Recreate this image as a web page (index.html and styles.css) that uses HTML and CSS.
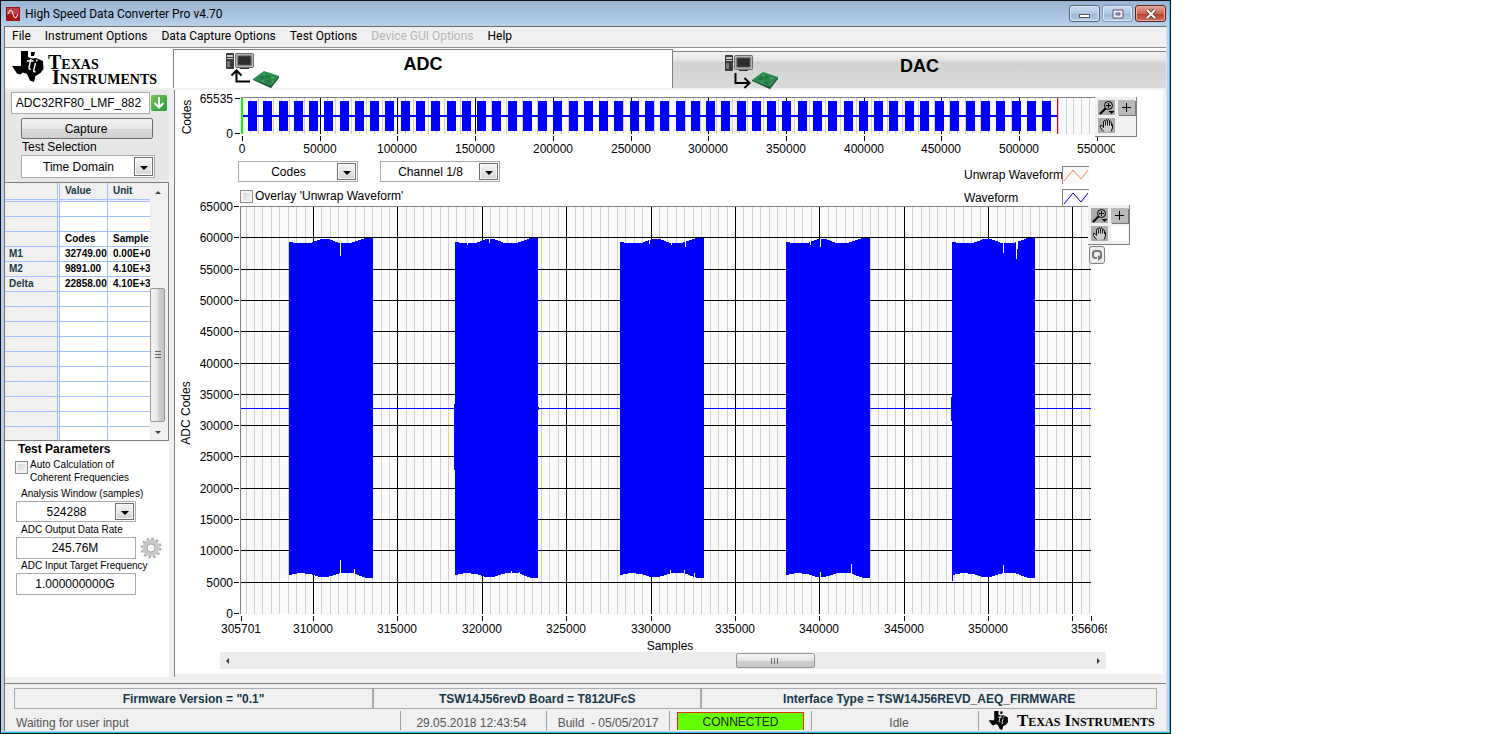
FILE: index.html
```html
<!DOCTYPE html>
<html lang="en">
<head>
  <meta charset="UTF-8">
  <meta name="viewport" content="width=device-width, initial-scale=1">
  <title>High Speed Data Converter Pro v4.70</title>
  <link rel="stylesheet" href="styles.css">
</head>
<body>
  <!-- Shared icons -->
  <svg class="sprite" aria-hidden="true">
    <symbol id="ti-logo" viewBox="0 0 32 31">
      <path d="M9 0h7v6l4 1.500 4-.5 7 3 .5 8-3 4-5 3-1.500 6-4-1.500-3-6.500-4-1.500-3 2-3-1-5-7.500H9z" fill="#000"/>
      <path d="M20.500 1.500l-.8 3M19 8l-2 8.500q-.4 2 1.800 1.500M15 10h6.500M25 8.500l-.5 2M23.500 12l-1.800 7.500q-.3 2 1.800 1" fill="none" stroke="#fff" stroke-width="1.400"/>
      <path d="M19 1h4l-1 4h-3z" fill="#000"/>
    </symbol>
    <symbol id="pc" viewBox="0 0 28 17">
      <rect x="0" y="0" width="8" height="16" rx="1" fill="#3a3a3a"/>
      <path d="M1 2h6v2H1zM1 5h6v1H1z" fill="#c8c8c8"/>
      <path d="M1 8h3v6H1z" fill="#777"/>
      <rect x="9.500" y=".5" width="18" height="14" rx="1" fill="#b4b4b4" stroke="#6e6e6e"/>
      <rect x="12" y="3" width="13" height="9" fill="#2c2c2c" stroke="#555"/>
      <path d="M14 15h9v1h-9z" fill="#333"/>
    </symbol>
    <symbol id="board" viewBox="0 0 26 17">
      <path d="M0 8L11 0l15 5-8 12z" fill="#2a8a4e"/>
      <path d="M0 8l18 7 8-10v2l-8 10L0 9z" fill="#14552c"/>
      <path d="M6 7l3-2 3 1-3 2zM13 4l4 1-2 2-3-1zM14 9l4 1-2 2-3-1z" fill="#1f7040"/>
      <path d="M10 3l2 .5M18 6l3 1M9 10l2 1M19 11l1 .5" stroke="#6fb585"/>
    </symbol>
    <symbol id="magnifier" viewBox="0 0 17 15">
      <circle cx="10.500" cy="5.500" r="4" fill="none" stroke="#000"/>
      <path d="M8 5.500h5M10.500 3v5" stroke="#000"/>
      <path d="M7.500 8.500L2 14" stroke="#000" stroke-width="2"/>
      <path d="M10.500 11h6l-3 3z" fill="#000"/>
    </symbol>
    <symbol id="plus" viewBox="0 0 17 15">
      <path d="M4 7.500h9M8.500 3v9" stroke="#000"/>
    </symbol>
    <symbol id="hand" viewBox="0 0 17 15">
      <path d="M5.500 13.500L2.500 9.500V7.500H4L5.500 9V3.500L6.500 2.500 7.500 3.500 8.500 1.500 9.500 2.500 10.500 2 11.500 3.500 13 4 14.500 6.500V10L13 13.500z" fill="#cfcfcf"/>
      <path d="M5.500 13.500L2.500 9.500V7.500H4L5.500 9.500V3.500L6.500 2.500 7.500 4V7.500M7.500 3L8.500 1.500 9.500 3V7.500M9.500 2.500L10.500 1.500 11.500 3V7.500M11.500 4L12.500 3.500 13.500 5V8M13.500 6L14.500 6.500V10L13 13.500" fill="none" stroke="#000" stroke-width=".9"/>
    </symbol>
  </svg>

  <div class="window">
    <header class="titlebar">
      <svg class="app-icon" viewBox="0 0 14 14" width="14" height="14">
        <rect width="14" height="14" fill="#a31515"/>
        <rect x="1" y="1" width="12" height="6" fill="#c04040"/>
        <path d="M2 7l2-4 2 1 2 6 2 1 2-4" fill="none" stroke="#fff"/>
      </svg>
      <h1>High Speed Data Converter Pro v4.70</h1>
      <div class="window-buttons">
        <button type="button" aria-label="Minimize"><svg viewBox="0 0 12 10" width="12" height="10"><rect x=".5" y="5.500" width="10" height="3" fill="#fff" stroke="#555"/></svg></button>
        <button type="button" class="dim" aria-label="Maximize"><svg viewBox="0 0 12 10" width="12" height="10"><path d="M1 1h10v8H1zM4 4v2h4V4z" fill="#eef" fill-rule="evenodd" stroke="#556"/></svg></button>
        <button type="button" class="close" aria-label="Close"><svg viewBox="0 0 12 10" width="12" height="10"><path d="M2 1l8 8M10 1L2 9" stroke="#543" stroke-width="4"/><path d="M2 1l8 8M10 1L2 9" stroke="#fff" stroke-width="2"/></svg></button>
      </div>
    </header>

    <div class="client">
      <nav class="menu">
        <button type="button">File</button>
        <button type="button">Instrument Options</button>
        <button type="button">Data Capture Options</button>
        <button type="button">Test Options</button>
        <button type="button" disabled>Device GUI Options</button>
        <button type="button">Help</button>
      </nav>

      <div class="top">
        <div class="brand">
          <svg width="32" height="31"><use href="#ti-logo"/></svg>
          <div class="brand-name"><span>Texas</span><span>Instruments</span></div>
        </div>
        <div class="tabs" role="tablist">
          <button type="button" role="tab" aria-selected="true" class="tab active">
            <svg class="tab-icon" width="54" height="36" viewBox="0 0 54 36">
              <use href="#pc" width="28" height="17"/>
              <use href="#board" x="27" y="18" width="26" height="17"/>
              <path d="M24 28.500H10.500V18M5.500 22.500l5-5 5 5" fill="none" stroke="#000" stroke-width="2"/>
            </svg>
            <span>ADC</span>
          </button>
          <button type="button" role="tab" aria-selected="false" class="tab">
            <svg class="tab-icon" width="54" height="36" viewBox="0 0 54 36">
              <use href="#pc" width="28" height="17"/>
              <use href="#board" x="27" y="17" width="26" height="17"/>
              <path d="M10.500 18v10H24M19.500 23l5 5-5 5" fill="none" stroke="#000" stroke-width="2"/>
            </svg>
            <span>DAC</span>
          </button>
        </div>
      </div>

      <div class="main">
        <aside class="sidebar">
          <div class="capture">
            <div class="device">
              <input type="text" class="field" value="ADC32RF80_LMF_882" aria-label="Device">
              <button type="button" class="download" aria-label="Load firmware">
                <svg viewBox="0 0 16 16" width="16" height="16"><path d="M8 2v10M3.500 8L8 12.500 12.500 8" fill="none" stroke="#fff" stroke-width="2"/></svg>
              </button>
            </div>
            <button type="button" class="capture-btn">Capture</button>
            <label for="test">Test Selection</label>
            <div class="combo tall">
              <select id="test"><option>Time Domain</option></select>
            </div>
          </div>

          <div class="results">
            <div class="results-view">
              <table>
                <thead>
                  <tr><th></th><th>Value</th><th>Unit</th></tr>
                </thead>
                <tbody>
                  <tr><th></th><td></td><td></td></tr>
                  <tr><th></th><td></td><td></td></tr>
                  <tr><th></th><td>Codes</td><td>Sample</td></tr>
                  <tr><th>M1</th><td>32749.00</td><td>0.00E+0</td></tr>
                  <tr><th>M2</th><td>9891.00</td><td>4.10E+3</td></tr>
                  <tr><th>Delta</th><td>22858.00</td><td>4.10E+3</td></tr>
                  <tr><th></th><td></td><td></td></tr>
                  <tr><th></th><td></td><td></td></tr>
                  <tr><th></th><td></td><td></td></tr>
                  <tr><th></th><td></td><td></td></tr>
                  <tr><th></th><td></td><td></td></tr>
                  <tr><th></th><td></td><td></td></tr>
                  <tr><th></th><td></td><td></td></tr>
                  <tr><th></th><td></td><td></td></tr>
                  <tr><th></th><td></td><td></td></tr>
                  <tr><th></th><td></td><td></td></tr>
                </tbody>
              </table>
            </div>
            <div class="vscroll">
              <i class="arrow up"></i>
              <div class="thumb"></div>
              <i class="arrow down"></i>
            </div>
          </div>

          <form class="params">
            <h2>Test Parameters</h2>
            <div class="check">
              <input type="checkbox" id="auto">
              <label for="auto">Auto Calculation of<br>Coherent Frequencies</label>
            </div>
            <label for="samples">Analysis Window (samples)</label>
            <div class="combo">
              <select id="samples"><option>524288</option></select>
            </div>
            <label for="rate">ADC Output Data Rate</label>
            <div class="rate">
              <input type="text" class="field" id="rate" value="245.76M">
              <svg viewBox="0 0 22 22" width="22" height="22">
                <circle cx="11" cy="11" r="9" fill="none" stroke="#b0b0b0" stroke-width="3" stroke-dasharray="2.500 2.212"/>
                <circle cx="11" cy="11" r="6" fill="none" stroke="#c8c8c8" stroke-width="5"/>
                <circle cx="11" cy="11" r="4" fill="#fff" stroke="#a6a6a6"/>
              </svg>
            </div>
            <label for="freq">ADC Input Target Frequency</label>
            <input type="text" class="field" id="freq" value="1.000000000G">
          </form>
        </aside>

        <section class="content">
          <div class="graph">
            <svg id="overview" viewBox="0 0 988 67"></svg>
            <div class="palette overview-palette">
              <button type="button" aria-label="Zoom"><svg width="17" height="15"><use href="#magnifier"/></svg></button>
              <button type="button" class="raised" aria-label="Cursor"><svg width="17" height="15"><use href="#plus"/></svg></button>
              <button type="button" aria-label="Pan"><svg width="17" height="15"><use href="#hand"/></svg></button>
            </div>
          </div>

          <div class="graph-controls">
            <div>
              <div class="combos">
                <div class="combo"><select aria-label="Units"><option>Codes</option></select></div>
                <div class="combo"><select aria-label="Channel"><option>Channel 1/8</option></select></div>
              </div>
              <div class="check overlay">
                <input type="checkbox" id="unwrap">
                <label for="unwrap">Overlay 'Unwrap Waveform'</label>
              </div>
            </div>
            <ul class="legend">
              <li><span>Unwrap Waveform</span><svg width="27" height="18"><path d="M1 14l9-11 8 9 7-9" fill="none" stroke="#ff7f50"/></svg></li>
              <li><span>Waveform</span><svg width="27" height="18"><path d="M1 14l9-11 8 9 7-9" fill="none" stroke="#0000ff"/></svg></li>
            </ul>
          </div>

          <div class="graph">
            <svg id="waveform" viewBox="0 0 988 447"></svg>
            <div class="palette wave-palette">
              <button type="button" aria-label="Zoom"><svg width="17" height="15"><use href="#magnifier"/></svg></button>
              <button type="button" class="raised" aria-label="Cursor"><svg width="17" height="15"><use href="#plus"/></svg></button>
              <button type="button" aria-label="Pan"><svg width="17" height="15"><use href="#hand"/></svg></button>
              <span class="blank"></span>
            </div>
            <button type="button" class="refresh" aria-label="Reset view">
              <svg viewBox="0 0 12 14" width="12" height="14"><path d="M6 10H4.500Q2 10 2 7.500V5.500Q2 3 4.500 3h3Q10 3 10 5.500V10" fill="none" stroke="#777" stroke-width="2"/><path d="M7 7v6l4-3z" fill="#777"/></svg>
            </button>
          </div>

          <div class="hscroll">
            <i class="arrow left"></i>
            <div class="thumb"></div>
            <i class="arrow right"></i>
          </div>
        </section>
      </div>

      <footer>
        <div class="info">
          <div>Firmware Version = "0.1"</div>
          <div>TSW14J56revD Board = T812UFcS</div>
          <div>Interface Type = TSW14J56REVD_AEQ_FIRMWARE</div>
        </div>
        <div class="status">
          <div class="message">Waiting for user input</div>
          <div class="time">29.05.2018 12:43:54</div>
          <div class="build">Build&nbsp; - 05/05/2017</div>
          <div class="link"><span>CONNECTED</span></div>
          <div class="state">Idle</div>
          <div class="brand small">
            <svg width="21" height="19"><use href="#ti-logo"/></svg>
            <div class="brand-name">Texas Instruments</div>
          </div>
        </div>
      </footer>
    </div>
  </div>

  <script src="script.js"></script>
</body>
</html>
```

FILE: styles.css
```css
* {
  box-sizing: border-box;
}
body {
  margin: 0;
  background: #fff;
  font-family: "Liberation Sans", Arial, sans-serif;
  font-size: 12px;
  color: #000;
}
button, input, select {
  font: inherit;
  color: inherit;
  margin: 0;
}
h1, h2, ul {
  margin: 0;
  padding: 0;
}
svg {
  display: block;
  flex: none;
}
.sprite {
  position: absolute;
  width: 0;
  height: 0;
}

/* Window frame */
.window {
  display: flex;
  flex-direction: column;
  min-height: 100vh;
  margin-right: 317px;
  padding: 0 3px 2px;
  border: 1px solid #111;
  background: linear-gradient(#99b4d2, #b9d1ea 26px, #b9d1ea);
  box-shadow: inset -1px -1px 0 #35c3e8;
}
.titlebar {
  display: flex;
  align-items: center;
  height: 25px;
  padding: 0 1px 0 2px;
}
.titlebar h1 {
  flex: 1;
  margin-left: 5px;
  font: 12px Roboto, "Open Sans", sans-serif;
}
.window-buttons {
  display: flex;
  gap: 2px;
}
.window-buttons button {
  display: flex;
  align-items: center;
  justify-content: center;
  width: 31px;
  height: 17px;
  padding: 0;
  border: 1px solid #53657c;
  border-radius: 3px;
  background: linear-gradient(#c9dbee, #b2c8e0 50%, #9db6d2 51%, #b9cfe8);
  box-shadow: inset 0 0 0 1px #dbe8f5;
}
.window-buttons .dim {
  border-color: #8097b3;
}
.window-buttons .close {
  border-color: #5b2020;
  background: linear-gradient(#dfa095, #cd6a58 50%, #b83a25 51%, #cf7363);
  box-shadow: inset 0 0 0 1px #e5aea5;
}
.client {
  flex: 1;
  display: flex;
  flex-direction: column;
  border: 1px solid #6f6f6f;
  border-right-color: #e4e4e4;
  border-bottom: none;
  background: #f0f0f0;
}
.menu {
  display: flex;
  height: 21px;
  padding-bottom: 2px;
  border-bottom: 1px solid #8f8f8f;
}
.menu button {
  padding: 0 7px;
  border: none;
  background: none;
  font: 12px Roboto, "Open Sans", sans-serif;
}
.menu button:disabled {
  color: #b4b4b4;
}

/* Logo and tabs */
.top {
  display: flex;
  height: 40px;
  background: #fff;
}
.brand {
  display: flex;
  width: 168px;
  padding: 3px 0 0 7px;
}
.brand-name {
  display: flex;
  flex-direction: column;
  margin: 4px 0 0 4px;
  font: bold 20px "Liberation Serif", "Times New Roman", serif;
  font-variant: small-caps;
  line-height: 15px;
}
.brand-name span + span {
  margin-left: 4px;
}
.tabs {
  flex: 1;
  display: flex;
  align-items: flex-end;
}
.tab {
  position: relative;
  flex: 494;
  height: 37px;
  padding: 0 0 8px;
  border: none;
  border-top: 1px solid #808080;
  background: linear-gradient(#f2f2f2, #e4e4e4 25%, #d2d2d2 28%, #dadada);
  font-size: 18px;
  font-weight: bold;
}
.tab.active {
  flex: 499;
  height: 39px;
  padding-bottom: 9px;
  border: 1px solid #808080;
  border-bottom: none;
  background: #fff;
}
.tab-icon {
  position: absolute;
  left: 52px;
  top: 3px;
}

/* Sidebar */
.main {
  flex: 1;
  display: flex;
  border-top: 2px solid #f0f0f0;
}
.sidebar {
  width: 170px;
  padding-right: 5px;
  border-right: 1px solid #808080;
  background: linear-gradient(#f0f0f0, #f0f0f0) right / 5px 100% no-repeat #fff;
}
.field {
  display: block;
  width: 120px;
  height: 22px;
  padding: 0 2px 0 0;
  border: 1px solid #a9a9a9;
  background: #fff;
  text-align: center;
}
.capture {
  padding: 2px 2px 4px 6px;
  background: #e7e7e7;
}
.device {
  display: flex;
  align-items: center;
  gap: 1px;
}
.device .field {
  flex: 1;
  min-width: 0;
  padding-right: 4px;
}
.download {
  width: 16px;
  height: 16px;
  padding: 0;
  border: none;
  border-radius: 2px;
  background: linear-gradient(135deg, #7ec35c, #1e9a38);
}
.capture-btn {
  display: block;
  width: 132px;
  height: 21px;
  margin: 4px 0 0 10px;
  padding: 0 2px 0 0;
  border: 1px solid #707070;
  border-radius: 2px;
  background: linear-gradient(#f2f2f2, #e8e8e8 50%, #dadada 52%, #cfcfcf);
}
.capture label {
  display: block;
  margin-left: 11px;
  line-height: 16px;
}
.combo {
  position: relative;
  width: 120px;
  height: 21px;
}
.combo select {
  width: 100%;
  height: 100%;
  padding: 0 19px 0 0;
  border: 1px solid #a9a9a9;
  border-radius: 0;
  background: #fff;
  appearance: none;
  text-align-last: center;
}
.combo::before {
  content: "";
  position: absolute;
  top: 2px;
  right: 2px;
  bottom: 2px;
  width: 17px;
  border: 1px solid #6c6c6c;
  background: linear-gradient(#f4f4f4, #e6e6e6 50%, #d4d4d4);
  box-shadow: inset 0 0 0 1px #fafafa;
  pointer-events: none;
}
.combo::after {
  content: "";
  position: absolute;
  top: 50%;
  right: 7px;
  border: 4px solid transparent;
  border-top-color: #000;
  border-bottom: none;
  margin-top: -1px;
  pointer-events: none;
}
.combo.tall {
  width: 134px;
  height: 23px;
  margin-left: 10px;
}

.results {
  display: flex;
  height: 259px;
  border: 1px solid #808080;
  border-left: none;
}
.results-view {
  flex: 1;
  overflow: hidden;
}
table {
  width: 146px;
  table-layout: fixed;
  border-collapse: separate;
  border-spacing: 0;
  background: #fff;
  font-size: 10px;
}
tr > :nth-child(1) { width: 55px; }
tr > :nth-child(2) { width: 48px; }
tr > :nth-child(3) { width: 43px; }
th, td {
  height: 15px;
  padding: 0 0 0 5px;
  border-bottom: 1px solid #a0c0ff;
  font-weight: bold;
  line-height: 14px;
  text-align: left;
  white-space: nowrap;
  overflow: hidden;
}
th {
  background: #f0f0f0;
  color: #17394a;
}
th:first-child {
  padding-left: 4px;
  border-right: 3px double #a0c0ff;
}
tr > :nth-child(2) {
  border-right: 1px solid #a0c0ff;
}
thead th {
  height: 19px;
  border-bottom: 3px double #a0c0ff;
}
.vscroll {
  display: flex;
  flex-direction: column;
  align-items: center;
  width: 18px;
  padding: 8px 3px 6px 0;
  background: #f0f0f0;
}
.thumb {
  border: 1px solid #969696;
  border-radius: 2px;
}
.vscroll .thumb {
  width: 15px;
  height: 134px;
  margin: auto 0 9px;
  background:
    repeating-linear-gradient(#666 0 1px, transparent 1px 3px) center / 6px 9px no-repeat,
    linear-gradient(90deg, #f4f4f4, #e6e6e6 50%, #d0d0d0 52%, #c4c4c4);
}
.arrow {
  border: 3px solid transparent;
}
.arrow.up {
  border-bottom-color: #404040;
  border-top: none;
}
.arrow.down {
  border-top-color: #404040;
  border-bottom: none;
}
.arrow.left {
  border-right-color: #404040;
  border-left: none;
}
.arrow.right {
  border-left-color: #404040;
  border-right: none;
}

.params {
  padding: 0 0 0 11px;
}
.params h2 {
  margin-left: 2px;
  font-size: 12px;
  line-height: 16px;
}
.params label {
  display: block;
  margin-left: 5px;
  font-size: 10px;
  line-height: 15px;
}
.check {
  display: flex;
  align-items: flex-start;
}
.check input {
  flex: none;
  width: 13px;
  height: 13px;
  border: 1px solid #8e8f8f;
  background: linear-gradient(135deg, #cfcfcf, #f6f6f6);
  box-shadow: inset 0 0 0 2px #f4f4f4;
  appearance: none;
}
.params .check {
  margin: 1px 0 2px -1px;
}
.params .check input {
  margin-top: 3px;
}
.params .check label {
  margin-left: 2px;
  line-height: 13px;
}
.rate {
  display: flex;
  align-items: center;
  gap: 4px;
  margin-bottom: -1px;
}

/* Graphs */
.content {
  flex: 1;
  min-width: 0;
  border-right: 3px solid #f0f0f0;
  border-bottom: 3px solid #f0f0f0;
  background: #fff;
}
.graph {
  position: relative;
}
.graph > svg {
  width: 100%;
  overflow: visible;
}
.graph text {
  font-size: 12px;
}
.palette {
  position: absolute;
  display: grid;
  grid-template-columns: 17px 17px;
  gap: 3px;
  padding: 3px 1px 3px 3px;
  border: 1px solid #808080;
  border-top: none;
  border-left: none;
  background: #f0f0f0;
}
.palette button {
  width: 17px;
  height: 15px;
  padding: 0;
  border: none;
  background: #acacac;
}
.palette .raised {
  background: #b9b9b9;
  box-shadow: 1px 1px 0 #777;
}
.blank {
  background: #fff;
}
.overview-palette {
  top: 7px;
  right: 26px;
}
.wave-palette {
  top: 0;
  right: 33px;
}
.refresh {
  position: absolute;
  top: 41px;
  right: 58px;
  display: flex;
  align-items: center;
  justify-content: center;
  width: 16px;
  height: 18px;
  padding: 0;
  border: 1px solid #808080;
  border-radius: 3px;
  background: #eee;
}
.graph-controls {
  display: flex;
  justify-content: space-between;
  height: 48px;
  padding: 4px 74px 0 63px;
}
.combos {
  display: flex;
  gap: 22px;
}
.overlay {
  margin: 8px 0 0 2px;
}
.overlay label {
  margin-left: 2px;
  line-height: 13px;
}
.legend {
  list-style: none;
  padding-top: 5px;
}
.legend li {
  display: flex;
  height: 23px;
}
.legend span {
  width: 98px;
  line-height: 18px;
  white-space: nowrap;
  overflow: hidden;
}
.legend svg {
  border-top: 1px solid #808080;
  border-left: 1px solid #808080;
  background: #fafafa;
}
.hscroll {
  display: flex;
  align-items: center;
  height: 17px;
  margin: 0 57px 0 45px;
  padding: 0 6px;
  background: #ececec;
}
.hscroll .thumb {
  width: 79px;
  height: 15px;
  margin: 0 auto 0 58%;
  background:
    repeating-linear-gradient(90deg, #666 0 1px, transparent 1px 3px) center / 8px 6px no-repeat,
    linear-gradient(#f4f4f4, #e6e6e6 50%, #d0d0d0 52%, #c8c8c8);
}

/* Footer */
footer {
  padding-top: 6px;
}
.info {
  display: flex;
  margin: 0;
  padding: 4px 9px 0;
  border-top: 1px solid #808080;
}
.info div {
  flex: 456;
  height: 21px;
  border: 1px solid #a9a9b0;
  color: #17394a;
  font-weight: bold;
  line-height: 20px;
  text-align: center;
}
.info div:nth-child(1) { flex: 359; }
.info div:nth-child(2) { flex: 328; }
.status {
  display: flex;
  height: 22px;
  padding: 2px 0 1px;
  color: #555;
  line-height: 24px;
  text-align: center;
  white-space: nowrap;
}
.status > div + div {
  border-left: 1px solid #a0a0a0;
}
.message {
  flex: 1;
  padding-left: 11px;
  text-align: left;
}
.time {
  width: 146px;
  padding-right: 4px;
}
.build { width: 123px; }
.link {
  width: 142px;
  padding: 1px 7px 0;
}
.link span {
  display: block;
  height: 18px;
  border: 1px solid #e03010;
  border-bottom: none;
  background: #66ff00;
  color: #222;
  line-height: 18px;
}
.state {
  width: 167px;
  padding-left: 8px;
}
.brand.small {
  width: 188px;
  padding: 0 0 0 9px;
  color: #000;
}
.small .brand-name {
  margin: 2px 0 0 8px;
  font-size: 17px;
}
```

FILE: script.js
```js
const NS = 'http://www.w3.org/2000/svg';

function add(parent, name, attrs, text) {
  const el = document.createElementNS(NS, name);
  for (const key in attrs) el.setAttribute(key, attrs[key]);
  if (text !== undefined) el.textContent = text;
  parent.appendChild(el);
  return el;
}

function rect(parent, x, y, width, height, fill) {
  return add(parent, 'rect', { x, y, width, height, fill, 'shape-rendering': 'crispEdges' });
}

function label(parent, x, y, text, anchor) {
  return add(parent, 'text', { x, y, 'text-anchor': anchor || 'middle' }, text);
}

function rotatedLabel(parent, x, y, text) {
  add(parent, 'text', { 'text-anchor': 'middle', transform: `translate(${x} ${y}) rotate(-90)` }, text);
}

// Group whose contents are cut off at the given right edge.
function clipped(svg, id, width, height) {
  const clip = add(svg, 'clipPath', { id });
  add(clip, 'rect', { x: 0, y: 0, width, height });
  return add(svg, 'g', { 'clip-path': `url(#${id})` });
}

// Whole capture, 0 to 550000 samples
function drawOverview() {
  const svg = document.getElementById('overview');
  const left = 67, step = 77.7;
  rect(svg, 66, 7, 854, 37, '#fafafa');
  for (let i = 1; i < 110; i++) {
    const x = Math.round(left + i * step / 10);
    rect(svg, x, 8, 1, 36, i % 10 ? '#d0d0d0' : '#000');
  }
  for (let i = 0; i < 53; i++) {
    rect(svg, Math.round(73 + i * 15.27), 11, 9, 30, '#0000ff');
  }
  rect(svg, 67, 25, 815, 2, '#0000ff');
  rect(svg, 66, 7, 854, 1, '#808080');
  rect(svg, 66, 8, 2, 36, '#00ff00');
  rect(svg, 882, 8, 1, 36, '#e00000');

  const axis = clipped(svg, 'overview-clip', 940, 67);
  for (let i = 0; i <= 11; i++) {
    const x = Math.round(left + i * step);
    rect(axis, x, 46, 1, 5, '#000');
    label(axis, x, 63, i * 50000);
  }
  label(svg, 58, 13, '65535', 'end');
  label(svg, 58, 48, '0', 'end');
  rect(svg, 60, 8, 5, 1, '#000');
  rect(svg, 60, 43, 5, 1, '#000');
  rotatedLabel(svg, 16, 27, 'Codes');
}

// Burst outline as [position, y] pairs
const TOP = [[0, 37], [0.08, 38], [0.25, 38], [0.38, 34], [0.47, 34], [0.6, 38], [0.74, 38], [0.92, 33], [1, 33]];
const BOTTOM = [[0, 370], [0.12, 368], [0.25, 369], [0.36, 372], [0.46, 372], [0.62, 368], [0.76, 368], [0.92, 373], [1, 373]];

const BURSTS = [
  { x: 114, w: 84, top: { 51: 51 }, bottom: { 51: 355, 65: 364 } },
  { x: 280, w: 83, top: { 12: 40, 34: 38 }, bottom: { 56: 366, 64: 367 } },
  { x: 445, w: 84, top: { 29: 39, 51: 40, 65: 42 }, bottom: { 50: 365, 64: 365, 74: 368 } },
  { x: 611, w: 84, top: { 24: 40, 34: 42 }, bottom: { 34: 367, 65: 359 } },
  { x: 777, w: 83, top: { 51: 48, 64: 54, 65: 44 }, bottom: { 51: 360 } }
];

function heightAt(outline, t) {
  let i = 1;
  while (i < outline.length - 1 && outline[i][0] < t) i++;
  const [t0, y0] = outline[i - 1];
  const [t1, y1] = outline[i];
  return Math.round(y0 + (y1 - y0) * (t - t0) / (t1 - t0));
}

// Zoomed view, samples 305701 to 356069
function drawWaveform() {
  const svg = document.getElementById('waveform');
  const start = 305701, end = 356069, left = 66, width = 850;
  const toX = s => Math.floor(left + (s - start) * width / (end - start));
  const toY = code => Math.round(408 - code * 407 / 65000);

  rect(svg, 65, 1, 852, 408, '#fafafa');
  for (let s = 306000; s < end; s += 500) {
    if (s % 5000) rect(svg, toX(s), 2, 1, 407, '#d0d0d0');
  }
  for (let s = 310000; s < end; s += 5000) {
    rect(svg, toX(s), 2, 1, 407, '#000');
  }
  for (let code = 0; code <= 65000; code += 5000) {
    const y = toY(code);
    if (code > 0 && code < 65000) rect(svg, 66, y, 850, 1, '#000');
    rect(svg, 59, y, 5, 1, '#000');
    label(svg, 58, y + 5, code, 'end');
  }
  rect(svg, 65, 1, 852, 1, '#808080');
  rect(svg, 65, 1, 1, 408, '#808080');
  rect(svg, 66, 203, 850, 1, '#0000ff');

  BURSTS.forEach(burst => {
    let d = '';
    for (let i = 0; i < burst.w; i++) {
      const t = i / (burst.w - 1);
      const y0 = burst.top[i] || heightAt(TOP, t);
      const y1 = burst.bottom[i] || heightAt(BOTTOM, t);
      d += `M${burst.x + i} ${y0}h1V${y1}h-1z`;
    }
    add(svg, 'path', { d, fill: '#0000ff', 'shape-rendering': 'crispEdges' });
  });
  rect(svg, 279, 199, 1, 66, '#0000ff');
  rect(svg, 363, 202, 1, 3, '#0000ff');
  rect(svg, 776, 192, 1, 24, '#0000ff');
  rect(svg, 777, 370, 1, 6, '#0000ff');

  const axis = clipped(svg, 'waveform-clip', 932, 447);
  const ticks = [start, end];
  for (let s = 310000; s < end; s += 5000) ticks.push(s);
  ticks.forEach(s => {
    rect(axis, toX(s), 411, 1, 5, '#000');
    if (s !== 355000) label(axis, toX(s), 428, s);
  });
  label(svg, 495, 445, 'Samples');
  rotatedLabel(svg, 15, 208, 'ADC Codes');
}

drawOverview();
drawWaveform();
```
